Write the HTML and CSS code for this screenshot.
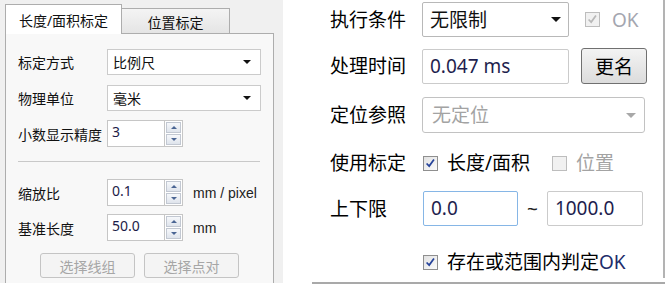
FILE: index.html
```html
<!DOCTYPE html>
<html lang="zh-CN">
<head>
    <meta charset="UTF-8">
    <title>标定设置</title>
    <link rel="stylesheet" href="styles.css">
</head>
<body>
    <div class="left-panel">
        <div class="tabs">
            <div class="tab active">长度/面积标定</div>
            <div class="tab">位置标定</div>
        </div>
        <div class="tab-pane">
            <div class="field">
                <span class="label">标定方式</span>
                <div class="combo"><span>比例尺</span><i class="arrow"></i></div>
            </div>
            <div class="field unit-row">
                <span class="label">物理单位</span>
                <div class="combo"><span>毫米</span><i class="arrow"></i></div>
            </div>
            <div class="field spin-row precision-row">
                <span class="label">小数显示精度</span>
                <div class="spin">
                    <span class="spin-value">3</span>
                    <span class="spin-buttons"><span class="spin-up"></span><span class="spin-down"></span></span>
                </div>
            </div>
            <div class="separator"></div>
            <div class="field spin-row scale-row">
                <span class="label">缩放比</span>
                <div class="spin">
                    <span class="spin-value">0.1</span>
                    <span class="spin-buttons"><span class="spin-up"></span><span class="spin-down"></span></span>
                </div>
                <span class="unit">mm / pixel</span>
            </div>
            <div class="field spin-row length-row">
                <span class="label">基准长度</span>
                <div class="spin">
                    <span class="spin-value">50.0</span>
                    <span class="spin-buttons"><span class="spin-up"></span><span class="spin-down"></span></span>
                </div>
                <span class="unit">mm</span>
            </div>
            <div class="pick-buttons">
                <button type="button" class="pick-button" disabled>选择线组</button>
                <button type="button" class="pick-button" disabled>选择点对</button>
            </div>
        </div>
    </div>

    <div class="right-panel">
        <div class="form">
            <div class="row exec-row">
                <span class="caption">执行条件</span>
                <div class="combo combo-lg"><span>无限制</span><i class="arrow arrow-lg"></i></div>
                <label class="check check-ok is-disabled">
                    <span class="box checked">
                        <svg viewBox="0 0 15 15" width="13" height="13"><polyline points="3,7.5 6,10.5 11.5,3" /></svg>
                    </span>
                    <span class="ok-text">OK</span>
                </label>
            </div>
            <div class="row time-row">
                <span class="caption">处理时间</span>
                <div class="text-box time-box">0.047 ms</div>
                <button type="button" class="rename-button">更名</button>
            </div>
            <div class="row locate-row">
                <span class="caption">定位参照</span>
                <div class="combo combo-lg combo-disabled"><span>无定位</span><i class="arrow arrow-lg"></i></div>
            </div>
            <div class="row calib-row">
                <span class="caption">使用标定</span>
                <label class="check">
                    <span class="box checked">
                        <svg viewBox="0 0 15 15" width="13" height="13"><polyline points="3,7.5 6,10.5 11.5,3" /></svg>
                    </span>
                    <span>长度/面积</span>
                </label>
                <label class="check check-pos is-disabled">
                    <span class="box"></span>
                    <span>位置</span>
                </label>
            </div>
            <div class="row limit-row">
                <span class="caption">上下限</span>
                <div class="text-box limit-box focused">0.0</div>
                <span class="tilde">~</span>
                <div class="text-box limit-box">1000.0</div>
            </div>
            <div class="row judge-row">
                <span class="caption"></span>
                <label class="check">
                    <span class="box checked">
                        <svg viewBox="0 0 15 15" width="13" height="13"><polyline points="3,7.5 6,10.5 11.5,3" /></svg>
                    </span>
                    <span>存在或范围内判定<span class="ok-blue">OK</span></span>
                </label>
            </div>
        </div>
        <div class="bottom-rule"></div>
    </div>
</body>
</html>
```

FILE: styles.css
```css
* {
    box-sizing: border-box;
}
body {
    margin: 0;
    width: 670px;
    height: 287px;
    display: flex;
    background: #fff;
    font-family: "Noto Sans", "Noto Sans CJK SC", sans-serif;
    color: #111;
}

/* left: calibration tabs */
.left-panel {
    width: 283px;
    height: 283px;
    background: #f0f0f0;
    padding: 4px 9px 0 5px;
    display: flex;
    flex-direction: column;
}
.tabs {
    display: flex;
    align-items: flex-end;
    height: 30px;
}
.tab {
    font-size: 14px;
    line-height: 20px;
    text-align: center;
    border: 1px solid #adadad;
    border-bottom: none;
}
.tab.active {
    width: 117px;
    height: 30px;
    padding-top: 6px;
    background: #fff;
    position: relative;
    z-index: 1;
}
.tab:not(.active) {
    width: 108px;
    height: 26px;
    padding-top: 4px;
    border-left: none;
    background: linear-gradient(#f4f4f4, #e4e4e4);
}
.tab-pane {
    flex: 1;
    margin-top: -1px;
    border: 1px solid #adadad;
    border-bottom: none;
    background: #f8f8f8;
    padding: 15px 12px 0 12px;
    display: flex;
    flex-direction: column;
}
.field {
    display: flex;
    align-items: center;
    height: 26px;
}
.label {
    width: 89px;
    flex-shrink: 0;
    font-size: 14px;
    white-space: nowrap;
}
.unit-row { margin-top: 10px; }
.spin-row { height: 27px; }
.precision-row { margin-top: 9px; }
.scale-row { margin-top: 17px; }
.length-row { margin-top: 8px; }

.combo {
    width: 156px;
    height: 26px;
    background: #fff;
    border: 1px solid #cbcbcb;
    display: flex;
    align-items: center;
    justify-content: space-between;
    padding: 0 9px 0 5px;
    font-size: 14px;
}
.arrow {
    width: 0;
    height: 0;
    border-left: 4px solid transparent;
    border-right: 4px solid transparent;
    border-top: 4px solid #111;
}

.spin {
    display: flex;
    flex-shrink: 0;
    height: 27px;
}
.spin-value {
    width: 58px;
    background: #fff;
    border: 1px solid #c6c6c6;
    padding-left: 4px;
    font-size: 14px;
    line-height: 22px;
    color: #1c1c48;
}
.spin-buttons {
    width: 18px;
    display: flex;
    flex-direction: column;
    border: 1px solid #c6c6c6;
    border-left: none;
    background: #fff;
    padding: 1px;
    gap: 1px;
}
.spin-up,
.spin-down {
    flex: 1;
    border: 1px solid #c2c8d2;
    background: linear-gradient(#f6f8fb, #dfe4ec);
    display: flex;
    align-items: center;
    justify-content: center;
}
.spin-up::after,
.spin-down::after {
    content: "";
    border-left: 3px solid transparent;
    border-right: 3px solid transparent;
}
.spin-up::after { border-bottom: 3px solid #4a6593; }
.spin-down::after { border-top: 3px solid #4a6593; }
.unit {
    margin-left: 10px;
    font-family: "Liberation Sans", "Noto Sans", sans-serif;
    font-size: 14px;
    white-space: nowrap;
    color: #222;
}
.separator {
    margin-top: 14px;
    width: 242px;
    height: 1px;
    background: #c9c9c9;
}
.pick-buttons {
    display: flex;
    gap: 9px;
    margin: 12px 0 0 22px;
}
.pick-button {
    width: 95px;
    height: 25px;
    border: 1px solid #c4c4c4;
    border-radius: 3px;
    background: #f4f4f4;
    color: #a6a6a6;
    font-family: inherit;
    font-size: 14px;
    padding: 0;
}

/* right: execution settings */
.right-panel {
    width: 382px;
    display: flex;
    flex-direction: column;
}
.form {
    height: 278px;
    border-right: 2px solid #b3b3b3;
}
.bottom-rule {
    margin: 4px 0 0 29px;
    height: 2px;
    background: #a9a9a9;
}
.row {
    display: flex;
    align-items: center;
    padding-left: 47px;
    font-size: 19px;
    line-height: 26px;
}
.caption {
    width: 92px;
    flex-shrink: 0;
    color: #000;
}
.exec-row { margin-top: 2px; height: 35px; }
.time-row { margin-top: 11px; height: 36px; }
.locate-row { margin-top: 13px; height: 36px; }
.calib-row { margin-top: 15px; height: 30px; }
.limit-row { margin-top: 13px; height: 35px; }
.judge-row { margin-top: 21px; height: 30px; }

.combo-lg {
    width: 147px;
    height: 35px;
    border-color: #b8b8b8;
    border-radius: 2px;
    padding: 0 7px 0 7px;
    font-size: 19px;
}
.arrow-lg {
    border-left-width: 5px;
    border-right-width: 5px;
    border-top-width: 5px;
}
.combo-disabled {
    width: 223px;
    height: 36px;
    border-color: #c2c2c2;
    border-radius: 3px;
    color: #a3a3a3;
    padding: 0 8px 0 9px;
}
.combo-disabled .arrow {
    border-top-color: #a8a8a8;
}

.text-box {
    height: 35px;
    background: #fff;
    border: 1px solid #cbcbcb;
    border-radius: 2px;
    padding-left: 7px;
    line-height: 32px;
    color: #1e1e4e;
}
.time-box {
    width: 147px;
}
.rename-button {
    margin-left: 12px;
    width: 66px;
    height: 36px;
    border: 1px solid #707070;
    border-radius: 3px;
    background: linear-gradient(#f3f3f3, #dcdcdc);
    font-family: inherit;
    font-size: 19px;
    color: #000;
    padding: 0;
}
.limit-box {
    width: 96px;
}
.limit-box.focused {
    width: 95px;
    margin-left: 1px;
    border-color: #86b6e6;
}
.tilde {
    margin: 0 9px;
    color: #222;
}

.check {
    display: flex;
    align-items: center;
    gap: 9px;
    color: #000;
}
.calib-row .check:first-of-type,
.judge-row .check {
    margin-left: 1px;
}
.box {
    width: 15px;
    height: 15px;
    border: 1px solid #8f8f8f;
    background: linear-gradient(135deg, #e2e2e2, #fbfbfb);
    display: flex;
    align-items: center;
    justify-content: center;
}
.box svg {
    fill: none;
    stroke: #26439a;
    stroke-width: 2;
}
.is-disabled {
    color: #a3a3a3;
}
.is-disabled .box {
    border-color: #bdbdbd;
    background: #f1f1f1;
}
.is-disabled .box svg {
    stroke: #b8b8b8;
}
.check-ok {
    margin-left: 16px;
    gap: 12px;
}
.ok-text {
    color: #a4a6b0;
}
.check-pos {
    margin-left: 22px;
}
.ok-blue {
    color: #1c2c6a;
}
```
